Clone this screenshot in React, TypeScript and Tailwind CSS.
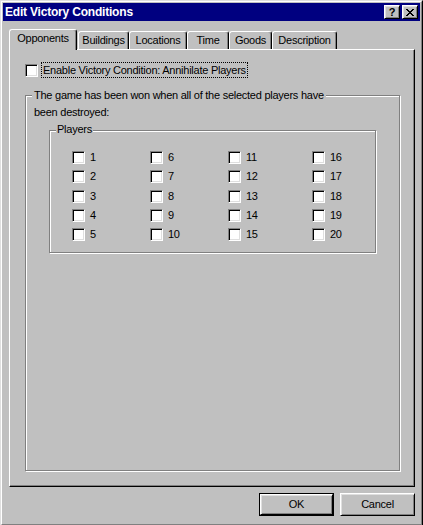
import React from "react";

function Check() {
  return (
    <div className="w-[13px] h-[13px] shrink-0 bg-white border border-t-[#808080] border-l-[#808080] border-r-white border-b-white shadow-[inset_1px_1px_0_#000,inset_-1px_-1px_0_#dfdfdf]" />
  );
}

function Item({ n }: { n: number }) {
  return (
    <div className="flex items-center h-[13px]">
      <Check />
      <span className="ml-[5px] leading-[13px]">{n}</span>
    </div>
  );
}

function Tab({ label, cls }: { label: string; cls: string }) {
  return (
    <div
      className={
        "h-[18px] bg-[#c0c0c0] border-l border-t border-r border-l-white border-t-white border-r-black rounded-t-[3px] shadow-[inset_-1px_0_0_#808080] pt-[2px] text-center leading-[13px] " +
        cls
      }
    >
      {label}
    </div>
  );
}

export default function App() {
  const cols = [
    [1, 2, 3, 4, 5],
    [6, 7, 8, 9, 10],
    [11, 12, 13, 14, 15],
    [16, 17, 18, 19, 20],
  ];
  const colW = ["w-[78px]", "w-[78px]", "w-[84px]", "w-[60px]"];
  return (
    <div className="w-[423px] h-[525px] bg-[#c0c0c0] border-l border-t border-r border-l-[#dfdfdf] border-t-[#dfdfdf] border-r-black font-['Liberation_Sans',Arial,sans-serif] text-[11px] tracking-[-0.25px] text-black">
      <div className="h-full flex flex-col border-l border-t border-r border-b border-l-white border-t-white border-r-[#808080] border-b-[#808080] p-[1px]">
        {/* Title bar */}
        <div className="h-[18px] bg-[#000080] flex items-center pl-[2px] pr-[2px]">
          <span className="flex-1 text-white font-bold text-[12px] tracking-[-0.2px] leading-[18px]">
            Edit Victory Conditions
          </span>
          <div className="w-[16px] h-[14px] bg-[#c0c0c0] border border-l-white border-t-white border-r-black border-b-black shadow-[inset_1px_1px_0_#dfdfdf,inset_-1px_-1px_0_#808080] flex items-center justify-center font-bold text-[11px] leading-none tracking-normal">
            ?
          </div>
          <div className="ml-[2px] w-[16px] h-[14px] bg-[#c0c0c0] border border-l-white border-t-white border-r-black border-b-black shadow-[inset_1px_1px_0_#dfdfdf,inset_-1px_-1px_0_#808080] flex items-center justify-center">
            <svg width="8" height="7" viewBox="0 0 8 7" shapeRendering="crispEdges">
              <path
                fill="#000"
                d="M0 0h2v1H0z M6 0h2v1H6z M1 1h2v1H1z M5 1h2v1H5z M2 2h4v1H2z M3 3h2v1H3z M2 4h4v1H2z M1 5h2v1H1z M5 5h2v1H5z M0 6h2v1H0z M6 6h2v1H6z"
              />
            </svg>
          </div>
        </div>

        <div className="mt-[8px] pl-[6px] pr-[5px]">
          {/* Tabs */}
          <div className="flex items-end h-[20px]">
            <div className="relative z-10 -mb-px w-[68px] h-[21px] bg-[#c0c0c0] border-l border-t border-r border-l-white border-t-white border-r-black rounded-t-[3px] shadow-[inset_-1px_0_0_#808080] pt-[2px] text-center leading-[13px]">
              Opponents
            </div>
            <Tab label="Buildings" cls="ml-[1px] w-[51px]" />
            <Tab label="Locations" cls="w-[58px]" />
            <Tab label="Time" cls="w-[42px]" />
            <Tab label="Goods" cls="w-[43px]" />
            <Tab label="Description" cls="w-[65px]" />
          </div>

          {/* Panel */}
          <div className="h-[438px] border border-l-white border-t-white border-r-black border-b-black shadow-[inset_-1px_-1px_0_#808080] pl-[15px] pt-[12px]">
            <div className="flex items-center h-[16px]">
              <Check />
              <div className="ml-[3px] border border-dotted border-black px-[1px] leading-[14px] whitespace-nowrap">
                Enable Victory Condition: Annihilate Players
              </div>
            </div>

            <div className="relative mt-[17px] w-[375px] h-[376px] border border-[#808080] shadow-[inset_1px_1px_0_#fff,1px_1px_0_#fff]">
              <div className="absolute left-[6px] top-[-9px] leading-[17px] whitespace-nowrap">
                <span className="bg-[#c0c0c0] px-[2px]">
                  The game has been won when all of the selected players have
                </span>
                <div className="pl-[2px]">been destroyed:</div>
              </div>

              <div className="relative ml-[23px] mt-[34px] w-[327px] h-[123px] border border-[#808080] shadow-[inset_1px_1px_0_#fff,1px_1px_0_#fff]">
                <div className="absolute left-[6px] top-[-8px] leading-[13px]">
                  <span className="bg-[#c0c0c0] px-[1px]">Players</span>
                </div>
                <div className="flex pl-[22px] pt-[20px]">
                  {cols.map((c, i) => (
                    <div key={i} className={"grid grid-rows-[repeat(5,19.25px)] " + colW[i]}>
                      {c.map((n) => (
                        <Item key={n} n={n} />
                      ))}
                    </div>
                  ))}
                </div>
              </div>
            </div>
          </div>

          {/* Buttons */}
          <div className="flex justify-end gap-[6px] mt-[6px]">
            <div className="w-[75px] h-[23px] border border-black">
              <div className="h-full border border-l-white border-t-white border-r-black border-b-black shadow-[inset_1px_1px_0_#dfdfdf,inset_-1px_-1px_0_#808080] flex items-center justify-center leading-[13px]">
                OK
              </div>
            </div>
            <div className="w-[75px] h-[23px] border border-l-white border-t-white border-r-black border-b-black shadow-[inset_1px_1px_0_#dfdfdf,inset_-1px_-1px_0_#808080] flex items-center justify-center leading-[13px]">
              Cancel
            </div>
          </div>
        </div>
      </div>
    </div>
  );
}
